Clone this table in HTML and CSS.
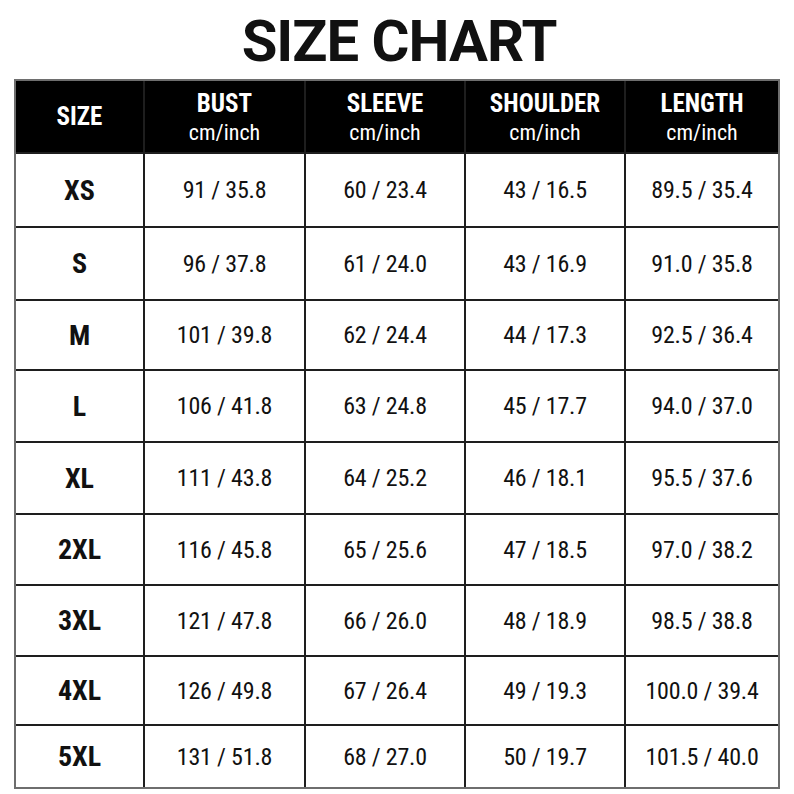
FILE: index.html
```html
<!DOCTYPE html>
<html lang="en">
<head>
<meta charset="utf-8">
<title>Size Chart</title>
<link rel="stylesheet" href="styles.css">
</head>
<body>
<div class="page">
  <h1 class="title">SIZE CHART</h1>
  <div class="chart">
    <div class="hd hd-single"><span class="hd-main">SIZE</span></div>
    <div class="hd"><span class="hd-main">BUST</span><span class="hd-unit">cm/inch</span></div>
    <div class="hd"><span class="hd-main">SLEEVE</span><span class="hd-unit">cm/inch</span></div>
    <div class="hd"><span class="hd-main">SHOULDER</span><span class="hd-unit">cm/inch</span></div>
    <div class="hd"><span class="hd-main">LENGTH</span><span class="hd-unit">cm/inch</span></div>

    <div class="sz">XS</div><div class="cell">91 / 35.8</div><div class="cell">60 / 23.4</div><div class="cell">43 / 16.5</div><div class="cell">89.5 / 35.4</div>
    <div class="sz">S</div><div class="cell">96 / 37.8</div><div class="cell">61 / 24.0</div><div class="cell">43 / 16.9</div><div class="cell">91.0 / 35.8</div>
    <div class="sz">M</div><div class="cell">101 / 39.8</div><div class="cell">62 / 24.4</div><div class="cell">44 / 17.3</div><div class="cell">92.5 / 36.4</div>
    <div class="sz">L</div><div class="cell">106 / 41.8</div><div class="cell">63 / 24.8</div><div class="cell">45 / 17.7</div><div class="cell">94.0 / 37.0</div>
    <div class="sz">XL</div><div class="cell">111 / 43.8</div><div class="cell">64 / 25.2</div><div class="cell">46 / 18.1</div><div class="cell">95.5 / 37.6</div>
    <div class="sz">2XL</div><div class="cell">116 / 45.8</div><div class="cell">65 / 25.6</div><div class="cell">47 / 18.5</div><div class="cell">97.0 / 38.2</div>
    <div class="sz">3XL</div><div class="cell">121 / 47.8</div><div class="cell">66 / 26.0</div><div class="cell">48 / 18.9</div><div class="cell">98.5 / 38.8</div>
    <div class="sz">4XL</div><div class="cell">126 / 49.8</div><div class="cell">67 / 26.4</div><div class="cell">49 / 19.3</div><div class="cell">100.0 / 39.4</div>
    <div class="sz">5XL</div><div class="cell">131 / 51.8</div><div class="cell">68 / 27.0</div><div class="cell">50 / 19.7</div><div class="cell">101.5 / 40.0</div>
  </div>
</div>
</body>
</html>
```
FILE: styles.css
```css
html, body {
  margin: 0;
  padding: 0;
  background: #ffffff;
}

.page {
  width: 794px;
  height: 794px;
  padding-top: 12px;
  box-sizing: border-box;
}

.title {
  margin: 0 0 9px 0;
  height: 58px;
  font-family: Roboto, "Liberation Sans", sans-serif;
  font-weight: 700;
  font-size: 58px;
  line-height: 1;
  letter-spacing: -1px;
  text-align: center;
  color: #111;
  padding-left: 4px;
}

.chart {
  margin-left: 14px;
  width: 766px;
  box-sizing: border-box;
  border: 2px solid #6e6e6e;
  background: #1e1e1e;
  display: grid;
  grid-template-columns: 127px 159px 158px 158px 152px;
  grid-template-rows: 71px 72px 71px 68px 70px 70px 69px 69px 67px 61px;
  gap: 2px;
}

.hd {
  background: #000;
  color: #fff;
  display: flex;
  flex-direction: column;
  align-items: center;
  justify-content: center;
  padding-top: 3px;
  box-sizing: border-box;
  font-family: "Liberation Sans Narrow", "Arial Narrow", "Roboto Condensed", Roboto, sans-serif;
}

.hd-single {
  padding-top: 0;
}

.hd-main {
  font-weight: 700;
  font-size: 25px;
  line-height: 26px;
}

.hd-unit {
  margin-top: 3px;
  font-weight: 400;
  font-size: 22px;
  line-height: 26px;
}

.hd-single .hd-main {
  font-size: 25px;
}

.sz, .cell {
  background: #fff;
  color: #111;
  display: flex;
  align-items: center;
  justify-content: center;
  font-family: "Liberation Sans Narrow", "Arial Narrow", "Roboto Condensed", Roboto, sans-serif;
}

.sz {
  font-weight: 700;
  font-size: 28px;
}

.cell {
  font-weight: 400;
  font-size: 24px;
  letter-spacing: -0.2px;
}
```
